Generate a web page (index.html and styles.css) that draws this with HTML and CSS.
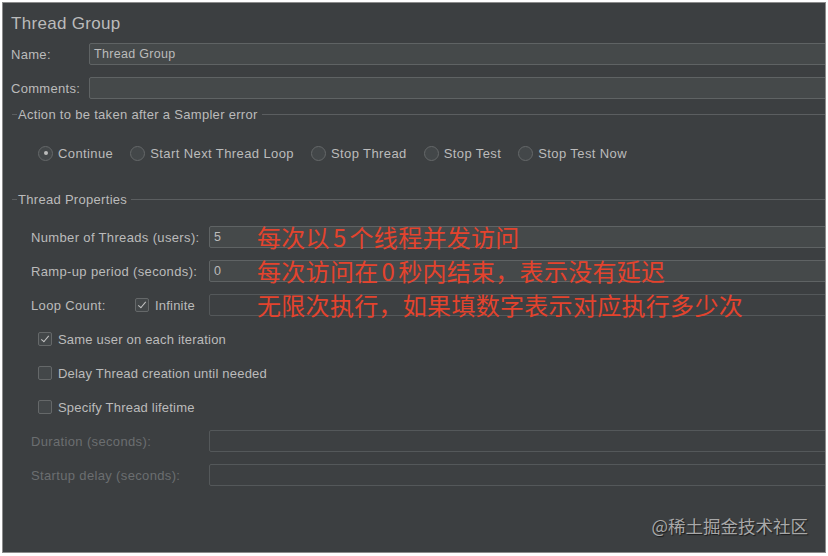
FILE: index.html
```html
<!DOCTYPE html>
<html lang="zh-CN">
<head>
    <meta charset="UTF-8">
    <title>Thread Group</title>
    <link rel="stylesheet" href="styles.css">
</head>
<body>
    <div class="panel">
        <h1 class="title">Thread Group</h1>

        <div class="field">
            <label class="field-label">Name:</label>
            <div class="input">Thread Group</div>
        </div>
        <div class="field">
            <label class="field-label">Comments:</label>
            <div class="input"></div>
        </div>

        <!-- what to do when a sampler fails -->
        <section class="group">
            <div class="group-title"><span>Action to be taken after a Sampler error</span></div>
            <div class="radios">
                <div class="radio-item"><span class="radio checked"></span>Continue</div>
                <div class="radio-item"><span class="radio"></span>Start Next Thread Loop</div>
                <div class="radio-item"><span class="radio"></span>Stop Thread</div>
                <div class="radio-item"><span class="radio"></span>Stop Test</div>
                <div class="radio-item"><span class="radio"></span>Stop Test Now</div>
            </div>
        </section>

        <section class="group">
            <div class="group-title"><span>Thread Properties</span></div>
            <div class="props">
                <div class="prop-row">
                    <label class="prop-label">Number of Threads (users):</label>
                    <div class="input">
                        <span class="value">5</span>
                        <span class="note">每次以<span class="num">5</span>个线程并发访问</span>
                    </div>
                </div>
                <div class="prop-row">
                    <label class="prop-label">Ramp-up period (seconds):</label>
                    <div class="input">
                        <span class="value">0</span>
                        <span class="note">每次访问在<span class="num">0</span>秒内结束，表示没有延迟</span>
                    </div>
                </div>
                <div class="prop-row">
                    <div class="prop-label loop">
                        <span class="loop-text">Loop Count:</span>
                        <span class="check-item"><span class="checkbox checked"></span>Infinite</span>
                    </div>
                    <div class="input disabled">
                        <span class="value"></span>
                        <span class="note">无限次执行，如果填数字表示对应执行多少次</span>
                    </div>
                </div>

                <div class="prop-row check-row">
                    <span class="check-item"><span class="checkbox checked"></span>Same user on each iteration</span>
                </div>
                <div class="prop-row check-row">
                    <span class="check-item"><span class="checkbox"></span>Delay Thread creation until needed</span>
                </div>
                <div class="prop-row check-row">
                    <span class="check-item"><span class="checkbox"></span>Specify Thread lifetime</span>
                </div>

                <div class="prop-row muted">
                    <label class="prop-label">Duration (seconds):</label>
                    <div class="input disabled"></div>
                </div>
                <div class="prop-row muted">
                    <label class="prop-label">Startup delay (seconds):</label>
                    <div class="input disabled"></div>
                </div>
            </div>
        </section>

        <div class="watermark">@稀土掘金技术社区</div>
    </div>
</body>
</html>
```

FILE: styles.css
```css
body {
    margin: 0;
    background-color: #ffffff;
    font-family: "Liberation Sans", Arial, sans-serif;
    font-size: 13px;
    color: #bbbbbb;
}
.panel {
    position: relative;
    margin: 2px 2px 3px 2px;
    height: 549px;
    border: 1px solid #8c8c8c;
    background-color: #3c3f41;
    overflow: hidden;
}
.title {
    margin: 0;
    padding-left: 8px;
    height: 40px;
    line-height: 41px;
    font-size: 17px;
    font-weight: normal;
    letter-spacing: 0.3px;
    color: #bbbbbb;
}

/* text fields */
.field {
    display: flex;
    align-items: center;
    height: 22px;
    margin-bottom: 12px;
    padding-left: 8px;
}
.field-label {
    width: 78px;
    flex: none;
    letter-spacing: 0.3px;
}
.input {
    flex: 1;
    display: flex;
    align-items: center;
    height: 20px;
    margin-right: -10px;
    padding-left: 4px;
    border: 1px solid #5f6364;
    border-radius: 2px;
    background-color: #45494a;
    font-size: 12.5px;
    letter-spacing: 0.3px;
}
.input.disabled {
    background-color: #3d4042;
    border-color: #54585a;
}
.value {
    width: 43px;
    flex: none;
}
.note {
    font-family: "Noto Sans CJK SC", sans-serif;
    font-size: 24px;
    line-height: 22px;
    letter-spacing: 0.3px;
    color: #e4432d;
    white-space: nowrap;
}
.note .num {
    margin: 0 3px;
}

/* titled separators */
.group {
    margin-left: 9px;
}
.group-title {
    display: flex;
    align-items: center;
    height: 16px;
    letter-spacing: 0.3px;
}
.group-title::before {
    content: "";
    width: 5px;
    border-top: 1px solid #5b5e60;
}
.group-title::after {
    content: "";
    flex: 1;
    border-top: 1px solid #5b5e60;
    margin-left: 4px;
}
.group-title span {
    padding-left: 1px;
}
.group:first-of-type {
    margin-top: -5px;
}
.group + .group {
    margin-top: 27px;
}

/* radio buttons */
.radios {
    display: flex;
    align-items: center;
    height: 22px;
    margin-top: 20px;
    padding-left: 26px;
}
.radio-item {
    display: flex;
    align-items: center;
    margin-right: 17px;
    letter-spacing: 0.4px;
}
.radio {
    position: relative;
    width: 13px;
    height: 13px;
    margin-right: 5px;
    border: 1px solid #656869;
    border-radius: 50%;
    background-color: #434749;
}
.radio.checked::after {
    content: "";
    position: absolute;
    left: 4.5px;
    top: 4.5px;
    width: 4px;
    height: 4px;
    border-radius: 50%;
    background-color: #bbbbbb;
}

/* thread properties */
.props {
    display: flex;
    flex-direction: column;
    gap: 12px;
    margin-top: 19px;
    padding-left: 19px;
}
.prop-row {
    display: flex;
    align-items: center;
    height: 22px;
}
.prop-label {
    width: 178px;
    flex: none;
    letter-spacing: 0.35px;
}
.prop-label.loop {
    display: flex;
    align-items: center;
}
.loop-text {
    width: 104px;
}
.check-row {
    padding-left: 7px;
}
.check-item {
    display: flex;
    align-items: center;
    letter-spacing: 0.2px;
}
.checkbox {
    position: relative;
    width: 12px;
    height: 12px;
    margin-right: 6px;
    border: 1px solid #656869;
    border-radius: 2px;
    background-color: #434749;
}
.checkbox.checked::after {
    content: "";
    position: absolute;
    left: 4px;
    top: 1px;
    width: 3px;
    height: 7px;
    border-right: 1.5px solid #c4c4c4;
    border-bottom: 1.5px solid #c4c4c4;
    transform: rotate(40deg);
}
.muted {
    color: #6b6e70;
}

.watermark {
    position: absolute;
    right: 17px;
    bottom: 14px;
    font-family: "Noto Sans CJK SC", sans-serif;
    font-size: 17.5px;
    color: #a8a8a8;
    text-shadow: 1px 1px 1px rgba(0, 0, 0, 0.6);
}
```
